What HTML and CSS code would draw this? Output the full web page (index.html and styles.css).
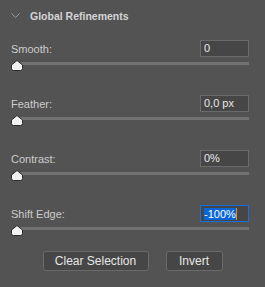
FILE: index.html
```html
<!DOCTYPE html>
<html>
<head>
<meta charset="utf-8">
<link rel="stylesheet" href="styles.css">
</head>
<body>
<div class="panel">
  <div class="header">
    <svg class="chev" width="9" height="6" viewBox="0 0 9 6"><path d="M0.5 0.5 L4.5 4.5 L8.5 0.5" fill="none" stroke="#9a9a9a" stroke-width="1"/></svg>
    <span class="title">Global Refinements</span>
  </div>

  <div class="row">
    <div class="line"><span class="label">Smooth:</span><div class="input">0</div></div>
    <div class="slider"><div class="track"></div><svg class="thumb" width="12" height="11" viewBox="0 0 12 11"><path d="M0.5 5 L6 0.5 L11.5 5 L11.5 8.5 Q11.5 10.5 9.5 10.5 L2.5 10.5 Q0.5 10.5 0.5 8.5 Z" fill="#f2f2f2" stroke="#2a2a2a"/></svg></div>
  </div>

  <div class="row">
    <div class="line"><span class="label">Feather:</span><div class="input">0,0 px</div></div>
    <div class="slider"><div class="track"></div><svg class="thumb" width="12" height="11" viewBox="0 0 12 11"><path d="M0.5 5 L6 0.5 L11.5 5 L11.5 8.5 Q11.5 10.5 9.5 10.5 L2.5 10.5 Q0.5 10.5 0.5 8.5 Z" fill="#f2f2f2" stroke="#2a2a2a"/></svg></div>
  </div>

  <div class="row">
    <div class="line"><span class="label">Contrast:</span><div class="input">0%</div></div>
    <div class="slider"><div class="track"></div><svg class="thumb" width="12" height="11" viewBox="0 0 12 11"><path d="M0.5 5 L6 0.5 L11.5 5 L11.5 8.5 Q11.5 10.5 9.5 10.5 L2.5 10.5 Q0.5 10.5 0.5 8.5 Z" fill="#f2f2f2" stroke="#2a2a2a"/></svg></div>
  </div>

  <div class="row">
    <div class="line"><span class="label">Shift Edge:</span><div class="input focus"><span class="sel">-100%</span><span class="caret"></span></div></div>
    <div class="slider"><div class="track"></div><svg class="thumb" width="12" height="11" viewBox="0 0 12 11"><path d="M0.5 5 L6 0.5 L11.5 5 L11.5 8.5 Q11.5 10.5 9.5 10.5 L2.5 10.5 Q0.5 10.5 0.5 8.5 Z" fill="#f2f2f2" stroke="#2a2a2a"/></svg></div>
  </div>

  <div class="buttons">
    <div class="btn wide">Clear Selection</div>
    <div class="btn narrow">Invert</div>
  </div>
</div>
</body>
</html>
```

FILE: styles.css
```css
html, body {
  margin: 0;
  padding: 0;
  background: #535353;
}
body {
  width: 265px;
  height: 287px;
  overflow: hidden;
  font-family: "Liberation Sans", Arial, sans-serif;
  color: #cfcfcf;
}
.panel {
  padding: 0 16px 0 11px;
}
.header {
  display: flex;
  align-items: center;
  height: 32px;
  margin-bottom: 8px;
}
.chev {
  display: block;
  margin-right: 10px;
}
.title {
  font-weight: bold;
  font-size: 10.5px;
  color: #d4d4d4;
}
.row {
  display: flex;
  flex-direction: column;
  margin-bottom: 25px;
}
.line {
  display: flex;
  justify-content: space-between;
  align-items: center;
  height: 17px;
}
.label {
  font-size: 11px;
  color: #cccccc;
}
.input {
  box-sizing: border-box;
  width: 49px;
  height: 17px;
  border: 1px solid #6b6b6b;
  background: #464646;
  color: #e6e6e6;
  font-size: 11px;
  line-height: 15px;
  padding-left: 3px;
  display: flex;
  align-items: center;
}
.input.focus {
  border-color: #1a6fd8;
}
.sel {
  background: #0a66d6;
  color: #ffffff;
  line-height: 12px;
}
.caret {
  display: inline-block;
  width: 1px;
  height: 12px;
  background: #e88a2a;
}
.slider {
  position: relative;
  height: 10px;
  margin-top: 3px;
}
.track {
  position: absolute;
  left: 5px;
  right: 0;
  top: 2px;
  height: 3px;
  background: #727272;
}
.thumb {
  position: absolute;
  left: 0;
  top: 0;
}
.buttons {
  display: flex;
  justify-content: center;
  gap: 17px;
  margin-top: -9px;
  margin-left: -11px;
  margin-right: -16px;
}
.btn {
  box-sizing: border-box;
  height: 20px;
  border: 1px solid #6a6a6a;
  border-radius: 3px;
  background: #464646;
  color: #e6e6e6;
  font-size: 12px;
  display: flex;
  align-items: center;
  justify-content: center;
}
.wide { width: 106px; }
.narrow { width: 57px; }
```
